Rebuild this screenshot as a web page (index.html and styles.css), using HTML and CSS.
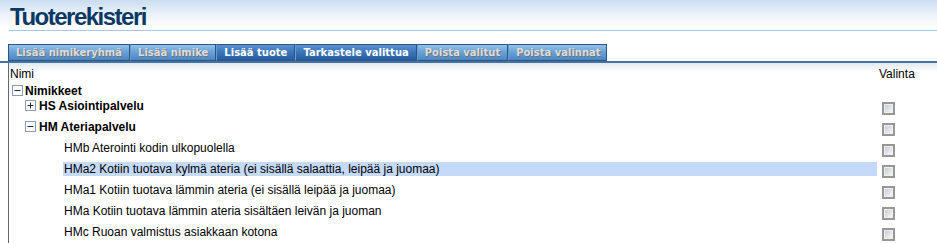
FILE: index.html
```html
<!DOCTYPE html>
<html lang="fi">
<head>
<meta charset="utf-8">
<title>Tuoterekisteri</title>
<link rel="stylesheet" href="styles.css">
</head>
<body>
<div class="top">
  <h1 class="title">Tuoterekisteri</h1>
</div>
<div class="rule"></div>
<div class="tabs">
  <span class="tab off">Lisää nimikeryhmä</span>
  <span class="tab off">Lisää nimike</span>
  <span class="tab on">Lisää tuote</span>
  <span class="tab on">Tarkastele valittua</span>
  <span class="tab off">Poista valitut</span>
  <span class="tab off">Poista valinnat</span>
</div>
<div class="list">
  <div class="head"><span class="col-name">Nimi</span><span class="col-sel">Valinta</span></div>
  <div class="row root">
    <div class="cell"><svg class="tog" width="11" height="11" viewBox="0 0 11 11"><rect x="0.5" y="0.5" width="10" height="10" fill="#fff" stroke="#8a9cb0"/><path d="M2.5 5.5h6" stroke="#1a2a44"/></svg><b>Nimikkeet</b></div>
  </div>
  <div class="row grp">
    <div class="cell"><svg class="tog" width="11" height="11" viewBox="0 0 11 11"><rect x="0.5" y="0.5" width="10" height="10" fill="#fff" stroke="#8a9cb0"/><path d="M2.5 5.5h6M5.5 2.5v6" stroke="#1a2a44"/></svg><b>HS Asiointipalvelu</b></div>
    <div class="sel"><span class="cb"></span></div>
  </div>
  <div class="row grp">
    <div class="cell"><svg class="tog" width="11" height="11" viewBox="0 0 11 11"><rect x="0.5" y="0.5" width="10" height="10" fill="#fff" stroke="#8a9cb0"/><path d="M2.5 5.5h6" stroke="#1a2a44"/></svg><b>HM Ateriapalvelu</b></div>
    <div class="sel"><span class="cb"></span></div>
  </div>
  <div class="row leaf">
    <div class="cell"><span class="label">HMb Aterointi kodin ulkopuolella</span></div>
    <div class="sel"><span class="cb"></span></div>
  </div>
  <div class="row leaf">
    <div class="cell"><span class="label selected">HMa2 Kotiin tuotava kylmä ateria (ei sisällä salaattia, leipää ja juomaa)</span></div>
    <div class="sel"><span class="cb"></span></div>
  </div>
  <div class="row leaf">
    <div class="cell"><span class="label">HMa1 Kotiin tuotava lämmin ateria (ei sisällä leipää ja juomaa)</span></div>
    <div class="sel"><span class="cb"></span></div>
  </div>
  <div class="row leaf">
    <div class="cell"><span class="label">HMa Kotiin tuotava lämmin ateria sisältäen leivän ja juoman</span></div>
    <div class="sel"><span class="cb"></span></div>
  </div>
  <div class="row leaf">
    <div class="cell"><span class="label">HMc Ruoan valmistus asiakkaan kotona</span></div>
    <div class="sel"><span class="cb"></span></div>
  </div>
</div>
</body>
</html>
```

FILE: styles.css
```css
html { overflow: hidden; }
body {
  margin: 0;
  background: #fff;
  font-family: "Liberation Sans", Arial, sans-serif;
  font-size: 12px;
  color: #000;
}

.top {
  height: 30px;
  background: linear-gradient(to bottom, #cadcef 0px, #e6eff8 12px, #ffffff 28px);
}
.title {
  margin: 0;
  padding: 3px 0 0 10px;
  font-size: 24px;
  line-height: 28px;
  font-weight: bold;
  letter-spacing: -1.5px;
  color: #0c3866;
}
.rule {
  margin-left: 9px;
  height: 1px;
  background: #a9c8e4;
}

.tabs {
  display: flex;
  margin-top: 13px;
  padding-left: 8px;
  border-bottom: 2px solid #46729f;
}
.tab {
  box-sizing: border-box;
  height: 17px;
  padding: 0 7px;
  font-family: "DejaVu Sans", Verdana, sans-serif;
  font-size: 10px;
  font-weight: bold;
  line-height: 15px;
  white-space: nowrap;
  border: 1px solid #2b5585;
  border-left-color: #6a9ccd;
}
.tab:first-child { border-left-color: #2b5585; }
.tab:last-child { padding-right: 5px; }
.tab.off {
  color: #dcdcdc;
  text-shadow: 1px 1px 0 #737373;
  background: linear-gradient(to bottom, #93c1e9 0%, #6aa3d8 45%, #4a86c3 100%);
}
.tab.on {
  color: #fff;
  background: linear-gradient(to bottom, #5a92d0 0%, #3a74b8 50%, #275c9f 100%);
}

.list {
  margin-left: 8px;
  border-left: 1px solid #5e6a78;
  background: linear-gradient(to bottom, #e2e9f1 0px, #ffffff 9px);
}
.head {
  display: grid;
  grid-template-columns: 869px 1fr;
  height: 21px;
  padding-top: 4px;
  box-sizing: border-box;
  line-height: 14px;
}
.col-name { padding-left: 1px; }
.col-sel { padding-left: 1px; }

.row {
  display: grid;
  grid-template-columns: 869px 1fr;
  line-height: 14px;
}
.row.root { height: 15px; }
.row.grp, .row.leaf { height: 21px; }

.cell {
  display: flex;
  align-items: flex-start;
}
.tog {
  display: block;
  flex: none;
  margin-top: 1px;
}
.root .tog { margin-left: 3px; margin-right: 2px; }
.grp .tog { margin-left: 16px; margin-right: 3px; }

.label {
  flex: 1;
  margin-left: 54px;
  margin-right: 1px;
  padding-left: 1px;
  height: 14px;
}
.label.selected { background: #c5d9f8; }

.sel { padding: 3px 0 0 4px; }
.cb {
  display: block;
  box-sizing: border-box;
  width: 13px;
  height: 13px;
  border: 2px solid #979797;
  box-shadow: inset 0 0 0 1px #efefef;
  background: linear-gradient(135deg, #c3c5d3 0%, #e2e3ea 55%, #fbfbfb 100%);
}
```
